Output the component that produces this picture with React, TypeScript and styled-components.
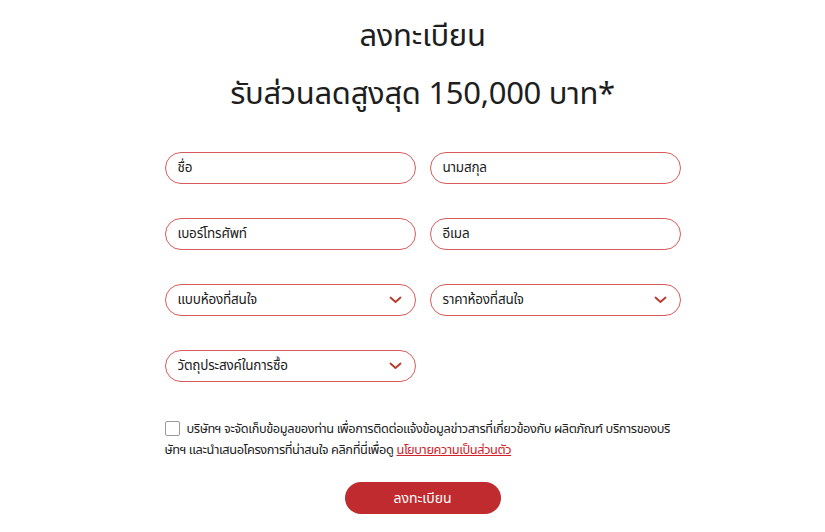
import React from "react";
import styled, { createGlobalStyle } from "styled-components";

const Global = createGlobalStyle`
  html, body { margin: 0; padding: 0; background: #fff; }
  body {
    font-family: "Noto Sans", "Noto Sans Thai", "Liberation Sans", sans-serif;
    color: #222;
  }
`;

const Page = styled.div`
  padding-left: 20px;
  display: flex;
  flex-direction: column;
  align-items: center;
`;

const Title = styled.h1`
  margin: 12px 0 0;
  font-size: 31px;
  font-weight: 400;
  line-height: 44px;
  color: #1e1e1e;
  text-align: center;
  letter-spacing: -0.3px;
`;

const SubTitle = styled.h2`
  margin: 14px 0 0;
  font-size: 31px;
  font-weight: 400;
  line-height: 44px;
  color: #1e1e1e;
  text-align: center;
  letter-spacing: -0.3px;
`;

const Form = styled.form`
  width: 516px;
  margin-top: 38px;
  display: grid;
  grid-template-columns: 251px 251px;
  column-gap: 14px;
  row-gap: 34px;
`;

const Field = styled.div`
  height: 32px;
  box-sizing: border-box;
  border: 1px solid #d85b5b;
  border-radius: 16px;
  display: flex;
  align-items: center;
  justify-content: space-between;
  padding: 0 13px 0 12px;
  font-size: 13.5px;
  letter-spacing: -0.2px;
  color: #222;
`;

const Chevron = () => (
  <svg width="13" height="8" viewBox="0 0 13 8" fill="none">
    <path d="M1.5 1.5 L6.5 6 L11.5 1.5" stroke="#b8392b" strokeWidth="1.8" strokeLinecap="round" strokeLinejoin="round" />
  </svg>
);

const Consent = styled.div`
  width: 520px;
  margin-top: 36px;
  margin-right: -4px;
  font-size: 12.8px;
  letter-spacing: -0.4px;
  line-height: 21px;
  color: #222;
  line-break: anywhere;
`;

const Box = styled.span`
  display: inline-block;
  width: 13px;
  height: 13px;
  border: 1px solid #9a9a9a;
  border-radius: 2px;
  vertical-align: -3px;
  margin-right: 7px;
  background: #fff;
`;

const Link = styled.a`
  color: #d0222a;
  text-decoration: underline;
`;

const Submit = styled.button`
  margin-top: 22px;
  width: 156px;
  height: 32px;
  border: none;
  border-radius: 16px;
  background: #bf2b2e;
  color: #fff;
  font-family: inherit;
  font-size: 14px;
  cursor: pointer;
`;

const fields: { label: string; select?: boolean }[] = [
  { label: "ชื่อ" },
  { label: "นามสกุล" },
  { label: "เบอร์โทรศัพท์" },
  { label: "อีเมล" },
  { label: "แบบห้องที่สนใจ", select: true },
  { label: "ราคาห้องที่สนใจ", select: true },
  { label: "วัตถุประสงค์ในการซื้อ", select: true },
];

export default function App() {
  return (
    <>
      <Global />
      <Page>
        <Title>ลงทะเบียน</Title>
        <SubTitle>รับส่วนลดสูงสุด 150,000 บาท*</SubTitle>
        <Form>
          {fields.map((f) => (
            <Field key={f.label}>
              <span>{f.label}</span>
              {f.select && <Chevron />}
            </Field>
          ))}
        </Form>
        <Consent>
          <Box />
          บริษัทฯ จะจัดเก็บข้อมูลของท่าน เพื่อการติดต่อแจ้งข้อมูลข่าวสารที่เกี่ยวข้องกับ ผลิตภัณฑ์ บริการของบริ
          <br />
          ษัทฯ และนำเสนอโครงการที่น่าสนใจ คลิกที่นี่เพื่อดู{" "}
          <Link href="#">นโยบายความเป็นส่วนตัว</Link>
        </Consent>
        <Submit type="button">ลงทะเบียน</Submit>
      </Page>
    </>
  );
}
